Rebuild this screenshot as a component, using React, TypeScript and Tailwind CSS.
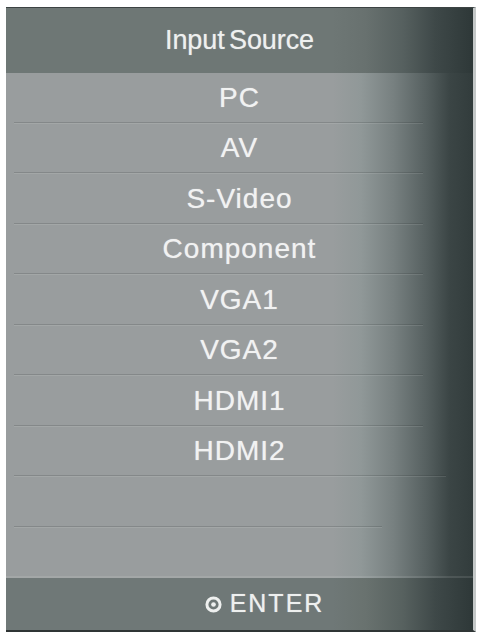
/**
 * TV OSD — Input Source menu
 * Gray panel with a dark right-side fade, list of sources, ENTER footer
 */

const SOURCES = ["PC", "AV", "S-Video", "Component", "VGA1", "VGA2", "HDMI1", "HDMI2", "", ""];

// where each separator line stops (px from panel left)
const LINE_ENDS = [417, 417, 417, 417, 417, 417, 417, 440, 376];

export default function App() {
  return (
    <div className="w-[478px] h-[634px] bg-white pt-[7px] pl-[6px] font-['Liberation_Sans',Arial,sans-serif]">
      <div className="w-[470px] h-[625px] flex flex-col border-t border-[#3c4343] border-b-2 border-b-[#2f3535] border-r-[3px] border-r-[#c4c8c8] bg-[#999d9e]">
        {/* Title */}
        <div className="h-[65px] flex items-center justify-center bg-[linear-gradient(to_right,#6e7775_0%,#6e7775_70%,#68716f_77%,#56605f_85%,#3e4848_92%,#2e3838_100%)]">
          <h1 className="text-[27px] text-[#eef0ef] tracking-[-0.1px] [word-spacing:-3px] [text-shadow:0_0_1px_rgba(255,255,255,0.5)]">Input Source</h1>
        </div>

        {/* List */}
        <div className="flex flex-col bg-[linear-gradient(to_right,#999d9e_0%,#999d9e_70%,#909898_76%,#778080_83%,#566060_90%,#3b4545_95%,#323c3c_100%)]">
          {SOURCES.map((name, i) => (
            <div key={i} className="h-[50.5px] flex flex-col">
              <div className="flex-1 flex items-center justify-center pt-px">
                <span className="text-[28px] text-[#f1f2f2] tracking-[1px] [text-shadow:0_0_1px_rgba(255,255,255,0.6)]">{name}</span>
              </div>
              {i < LINE_ENDS.length ? (
                <div className="pl-[8px]">
                  <div className="h-px bg-[rgba(40,45,46,0.18)]" style={{ width: LINE_ENDS[i] - 8 }} />
                  <div className="h-px bg-[rgba(255,255,255,0.1)]" style={{ width: LINE_ENDS[i] - 8 }} />
                </div>
              ) : (
                <div className="h-[2px] bg-[rgba(255,255,255,0.1)]" />
              )}
            </div>
          ))}
        </div>

        {/* Footer */}
        <div className="flex-1 flex items-center justify-center gap-[8px] pl-[50px] bg-[linear-gradient(to_right,#6f7877_0%,#6f7877_70%,#69726f_77%,#57615f_85%,#3e4848_92%,#2e3838_100%)]">
          <svg width="17" height="17" viewBox="0 0 16 16" className="text-[#eef0ef]">
            <circle cx="8" cy="8" r="6.2" fill="none" stroke="currentColor" strokeWidth="2.8" />
            <circle cx="8" cy="8" r="2.2" fill="currentColor" />
          </svg>
          <span className="text-[25px] text-[#eef0ef] tracking-[2px] [text-shadow:0_0_1px_rgba(255,255,255,0.6)]">ENTER</span>
        </div>
      </div>
    </div>
  );
}
